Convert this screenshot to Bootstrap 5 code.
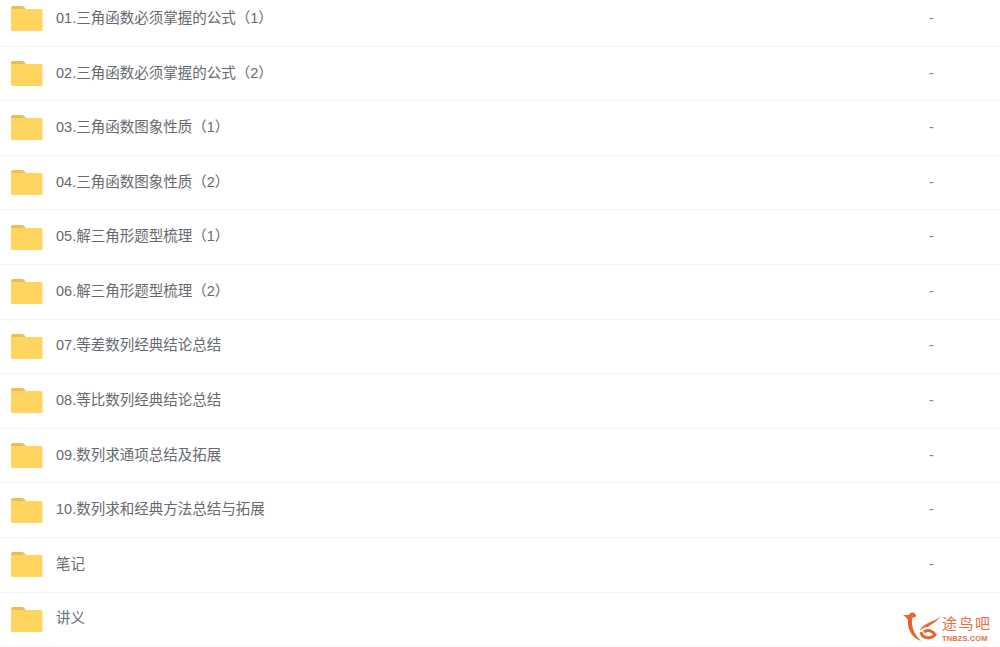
<!DOCTYPE html>
<html lang="zh-CN">
<head>
  <meta charset="UTF-8" />
  <meta name="viewport" content="width=device-width, initial-scale=1.0" />
  <title>文件列表</title>
  <link href="https://cdn.jsdelivr.net/npm/bootstrap@5.3.0/dist/css/bootstrap.min.css" rel="stylesheet" />
  <style>
    body {
      height: 647px;
      overflow: hidden;
      background: #fff;
      font-family: "Liberation Sans", "Noto Sans CJK SC", sans-serif;
      font-size: 14.5px;
      color: #666a70;
    }
    .file-list { margin-top: -8px; }
    .file-row {
      height: 54.6px;
      padding-left: 9.5px;
      border-bottom: 1px solid #f5f6f7;
    }
    .folder-icon { width: 33px; height: 27px; flex: none; }
    .file-name { margin-left: 13.5px; width: 873px; flex: none; }
    .file-size { color: #888; }
    .site-mark { position: absolute; left: 901px; top: 611px; width: 92px; height: 32px; color: #e8703f; }
    .site-mark svg { position: absolute; left: 0; top: 0; width: 42px; height: 32px; }
    .mark-name { position: absolute; left: 41px; top: 4px; font-size: 15px; line-height: 17px; letter-spacing: 1.5px; white-space: nowrap; }
    .mark-url { position: absolute; left: 41px; top: 24px; font-size: 7.5px; line-height: 8px; font-weight: 700; letter-spacing: .1px; white-space: nowrap; }
  </style>
</head>
<body>

<div class="file-list" id="files"></div>

<!-- Watermark -->
<div class="site-mark">
  <svg viewBox="0 0 42 32">
    <path d="M2 4 L8 4 C9 1 13 1 14 3 C16 4 15 7 13 6 C11 6 11 9 11 11 C11 18 14 24 20 30 C11 27 6 18 7 9 C6 7 4 5 2 4Z" fill="#e8622c"/>
    <path d="M41 2 C39 8 31 10 25 13 C21 15 19 18 19 20 C21 17 24 16 27 16 C33 12 38 9 41 2Z" fill="#e8703a"/>
    <path d="M20 21 C21 27 29 29 34 24 C32 20 27 18 23 21" fill="none" stroke="#e8622c" stroke-width="3"/>
  </svg>
  <div class="mark-name">途鸟吧</div>
  <div class="mark-url">TNBZS.COM</div>
</div>

<script>
  const names = [
    '01.三角函数必须掌握的公式（1）',
    '02.三角函数必须掌握的公式（2）',
    '03.三角函数图象性质（1）',
    '04.三角函数图象性质（2）',
    '05.解三角形题型梳理（1）',
    '06.解三角形题型梳理（2）',
    '07.等差数列经典结论总结',
    '08.等比数列经典结论总结',
    '09.数列求通项总结及拓展',
    '10.数列求和经典方法总结与拓展',
    '笔记',
    '讲义'
  ];

  const folder = `<svg class="folder-icon" viewBox="0 0 33 27">
    <path d="M1 3 Q1 1 3 1 H12 Q14 1 15 3 L16 4 H3 Q1 4 1 6Z" fill="#e8bd5c"/>
    <path d="M1 6 Q1 4 3 4 H31 Q32.500 4 32.500 6 V24.500 Q32.500 26 31 26 H3 Q1 26 1 24.500Z" fill="#ffd45f"/>
  </svg>`;

  // Build the rows
  document.getElementById('files').innerHTML = names.map((name, i) => `
    <div class="file-row d-flex align-items-center">
      ${folder}
      <div class="file-name">${name}</div>
      <div class="file-size">${i < 11 ? '-' : ''}</div>
    </div>`).join('');
</script>
<script src="https://cdn.jsdelivr.net/npm/bootstrap@5.3.0/dist/js/bootstrap.bundle.min.js"></script>
</body>
</html>
